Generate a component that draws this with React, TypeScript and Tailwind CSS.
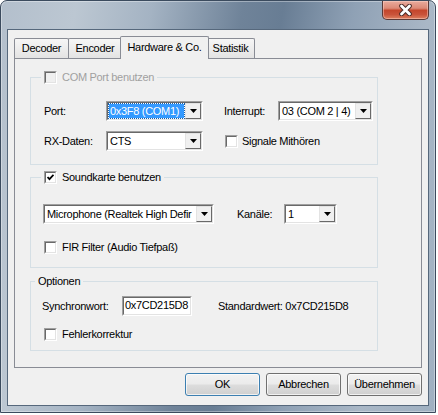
import React from "react";

// Classic sunken 3D edge used by combos, text boxes and check boxes
const sunkenOuter = "border border-t-[#a0a0a0] border-l-[#a0a0a0] border-r-white border-b-white";
const sunkenInner = "border border-t-[#696969] border-l-[#696969] border-r-[#e3e3e3] border-b-[#e3e3e3]";

function CloseButton() {
     return (
          <div className="flex h-[19px] w-[47px] items-center justify-center rounded-b-[5px] border border-t-0 border-[#5a3a38] bg-[linear-gradient(180deg,#e9ab9d_0%,#dc8a77_40%,#c4462c_52%,#c9533a_75%,#dd8060_100%)] shadow-[inset_0_0_0_1px_rgba(255,220,210,0.45)]">
               <svg width="15" height="12" viewBox="0 0 15 12">
                    <path d="M3.5 2 L11.5 10 M11.5 2 L3.5 10" stroke="#4a2a26" strokeWidth="4.6" strokeLinecap="round" />
                    <path d="M3.5 2 L11.5 10 M11.5 2 L3.5 10" stroke="#ffffff" strokeWidth="2.8" strokeLinecap="round" />
               </svg>
          </div>
     );
}

function Arrow() {
     return (
          <svg width="7" height="4" viewBox="0 0 7 4">
               <polygon points="0,0 7,0 3.5,4" fill="#000" />
          </svg>
     );
}

function Combo({ value, className, selected }: { value: string; className: string; selected?: boolean }) {
     return (
          <div className={`h-[20px] shrink-0 ${sunkenOuter} ${className}`}>
               <div className={`flex h-full w-full items-center bg-white ${sunkenInner}`}>
                    <div className="flex h-full min-w-0 flex-1 items-center overflow-hidden px-[1px]">
                         <span
                              className={`w-full overflow-hidden whitespace-nowrap px-[1px] leading-[14px] ${
                                   selected ? "bg-[#3399ff] text-white outline outline-1 outline-dotted outline-[#1a5fa8]" : ""
                              }`}
                         >
                              {value}
                         </span>
                    </div>
                    <div className="flex h-full w-[16px] shrink-0 items-center justify-center border border-t-[#e3e3e3] border-l-[#e3e3e3] border-r-[#696969] border-b-[#696969] bg-[#f0f0f0]">
                         <Arrow />
                    </div>
               </div>
          </div>
     );
}

function Check({ checked, disabled }: { checked?: boolean; disabled?: boolean }) {
     return (
          <div className={`h-[13px] w-[13px] shrink-0 ${sunkenOuter}`}>
               <div className={`flex h-full w-full items-center justify-center ${sunkenInner} ${disabled ? "bg-[#f0f0f0]" : "bg-white"}`}>
                    {checked && (
                         <svg width="7" height="7" viewBox="0 0 7 7">
                              <path d="M0.5 3 L2.5 5.2 L6.5 0.8" stroke="#000" strokeWidth="1.8" fill="none" />
                         </svg>
                    )}
               </div>
          </div>
     );
}

function Tab({ label, className }: { label: string; className: string }) {
     return (
          <div
               className={`flex h-[20px] items-center justify-center rounded-t-[2px] border border-b-0 border-[#898c95] bg-[linear-gradient(180deg,#f6f6f6_0%,#ededed_50%,#e3e3e3_100%)] ${className}`}
          >
               {label}
          </div>
     );
}

function Button({ label, isDefault }: { label: string; isDefault?: boolean }) {
     return (
          <div
               className={`flex h-[23px] w-[75px] items-center justify-center rounded-[3px] border ${
                    isDefault ? "border-[#3c7fb1]" : "border-[#707070]"
               } bg-[linear-gradient(180deg,#f2f2f2_0%,#ebebeb_48%,#dddddd_52%,#cfcfcf_100%)] shadow-[inset_0_0_0_1px_rgba(255,255,255,0.7)]`}
          >
               {label}
          </div>
     );
}

export default function App() {
     return (
          <div className="h-[415px] w-[438px] bg-white font-['Liberation_Sans',Arial,sans-serif] text-[11px] leading-[13px] tracking-[-0.3px] text-black">
               <div className="flex h-[413px] w-[436px] flex-col overflow-hidden rounded-t-[7px] border border-[#3b4b5e] bg-[linear-gradient(100deg,#b3bfcc_0%,#bcc7d2_15%,#a4b3c3_30%,#6f8399_48%,#687d94_56%,#8fa1b5_70%,#a9b7c6_85%,#9fb0c1_100%)] shadow-[inset_0_0_0_1px_rgba(255,255,255,0.35)]">
                    {/* title bar */}
                    <div className="flex h-[28px] shrink-0 justify-end pr-[6px]">
                         <CloseButton />
                    </div>

                    {/* client area */}
                    <div className="mx-[6px] flex h-[377px] flex-col border border-[#56687c] bg-[#f0f0f0] px-[6px] pt-[6px]">
                         {/* tab strip */}
                         <div className="flex h-[22px] items-end">
                              <Tab label="Decoder" className="w-[55px]" />
                              <Tab label="Encoder" className="-ml-px w-[54px]" />
                              <div className="relative z-10 -mb-px -ml-[2px] -mr-[2px] flex h-[23px] w-[89px] items-start justify-center rounded-t-[2px] border border-b-0 border-[#898c95] bg-[#f0f0f0] pt-[4px]">
                                   Hardware &amp; Co.
                              </div>
                              <Tab label="Statistik" className="-ml-px w-[49px]" />
                         </div>

                         {/* tab page */}
                         <div className="h-[310px] border border-[#898c95] bg-[#f0f0f0] pl-[15px]">
                              <fieldset className="mt-[11px] w-[348px] border border-[#d5dfe5] pb-[13px] pl-[13px]">
                                   <legend className="-ml-[3px] flex h-[14px] items-center gap-[5px] px-[3px] text-[#a0a0a0]">
                                        <Check disabled />
                                        <span>COM Port benutzen</span>
                                   </legend>
                                   <div className="mt-[17px] flex items-center">
                                        <span className="w-[62px]">Port:</span>
                                        <Combo value="0x3F8 (COM1)" className="w-[97px]" selected />
                                        <span className="ml-[21px] w-[54px]">Interrupt:</span>
                                        <Combo value="03 (COM 2 | 4)" className="w-[95px]" />
                                   </div>
                                   <div className="mt-[10px] flex items-center">
                                        <span className="w-[62px]">RX-Daten:</span>
                                        <Combo value="CTS" className="w-[97px]" />
                                        <div className="ml-[22px] flex items-center gap-[4px]">
                                             <Check />
                                             <span>Signale Mithören</span>
                                        </div>
                                   </div>
                              </fieldset>

                              <fieldset className="mt-[5px] w-[348px] border border-[#d5dfe5] pb-[13px] pl-[13px]">
                                   <legend className="-ml-[3px] flex h-[14px] items-center gap-[5px] px-[3px]">
                                        <Check checked />
                                        <span>Soundkarte benutzen</span>
                                   </legend>
                                   <div className="-ml-px mt-[20px] flex items-center">
                                        <Combo value="Microphone (Realtek High Defir" className="w-[171px]" />
                                        <span className="ml-[23px] w-[47px]">Kanäle:</span>
                                        <Combo value="1" className="w-[53px]" />
                                   </div>
                                   <div className="mt-[17px] flex h-[13px] items-center gap-[5px]">
                                        <Check />
                                        <span>FIR Filter (Audio Tiefpaß)</span>
                                   </div>
                              </fieldset>

                              <fieldset className="mt-[6px] w-[348px] border border-[#d5dfe5] pb-[9px] pl-[11px]">
                                   <legend className="-ml-[7px] flex h-[14px] items-center px-[3px]">Optionen</legend>
                                   <div className="mt-[8px] flex items-center">
                                        <span className="w-[80px]">Synchronwort:</span>
                                        <div className={`h-[20px] w-[70px] ${sunkenOuter}`}>
                                             <div className={`h-full w-full bg-white px-[1px] pt-[1px] ${sunkenInner}`}>0x7CD215D8</div>
                                        </div>
                                        <span className="ml-[26px]">Standardwert: 0x7CD215D8</span>
                                   </div>
                                   <div className="ml-[2px] mt-[12px] flex h-[13px] items-center gap-[5px]">
                                        <Check />
                                        <span>Fehlerkorrektur</span>
                                   </div>
                              </fieldset>
                         </div>

                         {/* dialog buttons */}
                         <div className="mt-[5px] flex justify-end gap-[6px]">
                              <Button label="OK" isDefault />
                              <Button label="Abbrechen" />
                              <Button label="Übernehmen" />
                         </div>
                    </div>
               </div>
          </div>
     );
}
